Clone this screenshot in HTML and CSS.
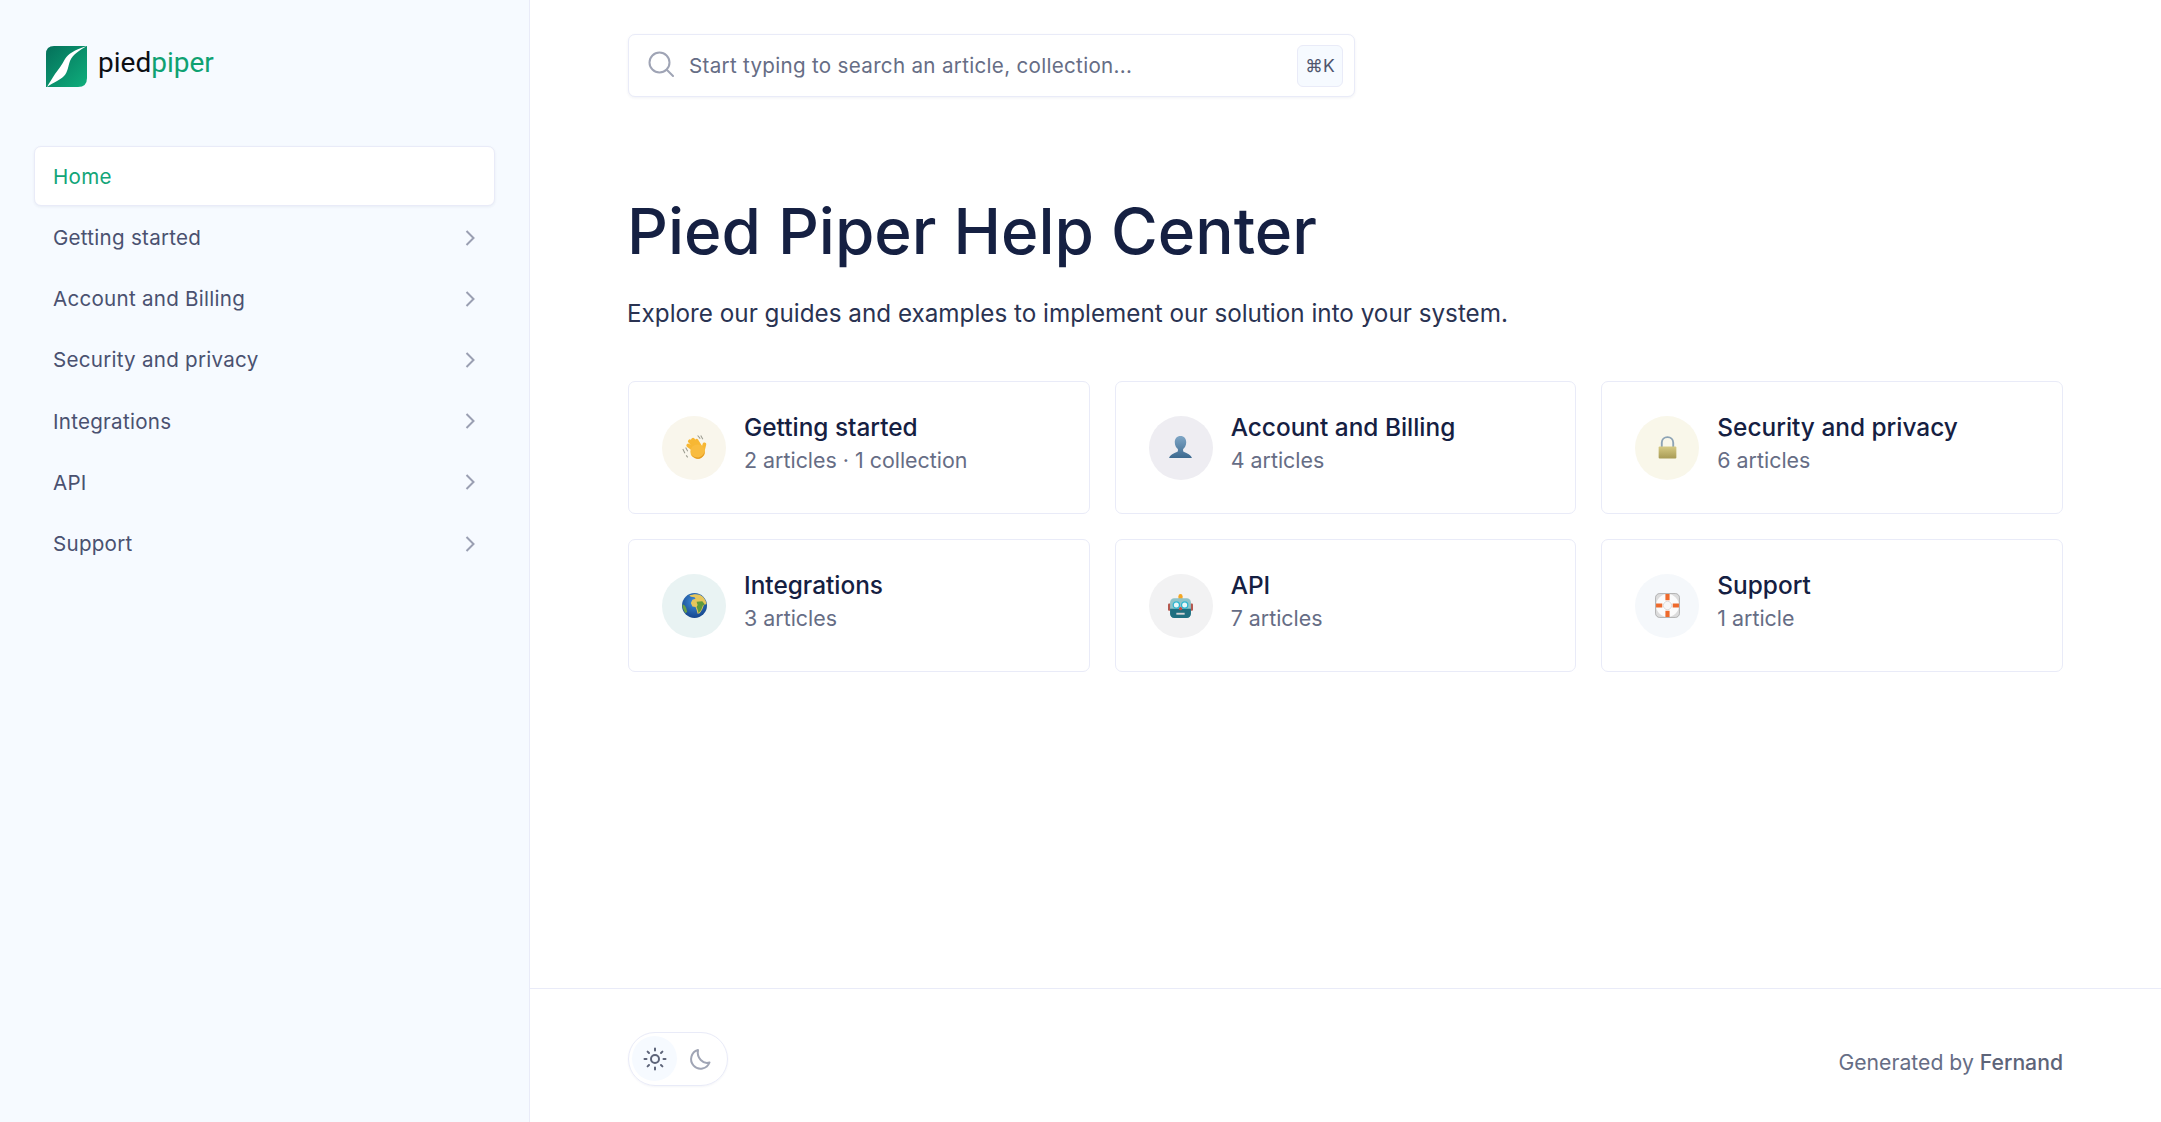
FILE: index.html
```html
<!DOCTYPE html>
<html>
<head>
    <meta charset="utf-8">
    <title>Pied Piper Help Center</title>
    <link rel="stylesheet" href="styles.css">
</head>
<body>
<div class="app">
    <aside class="sidebar">
        <a class="logo" href="#">
            <svg class="logo-mark" viewBox="0 0 41 41" width="41" height="41">
                <defs>
                    <linearGradient id="leafBg" x1="0" y1="0" x2="1" y2="1">
                        <stop offset="0" stop-color="#04705a"/>
                        <stop offset="1" stop-color="#0fae7c"/>
                    </linearGradient>
                </defs>
                <path d="M8 0H41V32Q41 41 32 41H0V8Q0 0 8 0Z" fill="url(#leafBg)"/>
                <path d="M41 0C28 4 22 8 19 13C16 19 12 24 9 28C6 33 3 37 1 41C8 36 14 34 18 30C22 26 22 20 24 15C27 8 34 4 41 0Z" fill="#fff"/>
            </svg>
            <span class="logo-text">pied<span class="logo-accent">piper</span></span>
        </a>
        <nav class="nav">
            <a class="nav-item active" href="#">Home</a>
            <a class="nav-item" href="#">Getting started
                <svg class="chevron" viewBox="0 0 10 16" width="10" height="16"><path d="M1.5 1l7 7-7 7"/></svg>
            </a>
            <a class="nav-item" href="#">Account and Billing
                <svg class="chevron" viewBox="0 0 10 16" width="10" height="16"><path d="M1.5 1l7 7-7 7"/></svg>
            </a>
            <a class="nav-item" href="#">Security and privacy
                <svg class="chevron" viewBox="0 0 10 16" width="10" height="16"><path d="M1.5 1l7 7-7 7"/></svg>
            </a>
            <a class="nav-item" href="#">Integrations
                <svg class="chevron" viewBox="0 0 10 16" width="10" height="16"><path d="M1.5 1l7 7-7 7"/></svg>
            </a>
            <a class="nav-item" href="#">API
                <svg class="chevron" viewBox="0 0 10 16" width="10" height="16"><path d="M1.5 1l7 7-7 7"/></svg>
            </a>
            <a class="nav-item" href="#">Support
                <svg class="chevron" viewBox="0 0 10 16" width="10" height="16"><path d="M1.5 1l7 7-7 7"/></svg>
            </a>
        </nav>
    </aside>

    <main class="main">
        <div class="content">
            <div class="search">
                <svg class="search-icon" viewBox="0 0 26 26" width="26" height="26">
                    <circle cx="11.5" cy="11.5" r="10"/>
                    <path d="M19 19l6 6"/>
                </svg>
                <span class="search-text">Start typing to search an article, collection...</span>
                <span class="kbd">⌘K</span>
            </div>

            <h1>Pied Piper Help Center</h1>
            <p class="intro">Explore our guides and examples to implement our solution into your system.</p>

            <div class="cards">
                <a class="card" href="#">
                    <span class="card-icon wave">
                        <svg viewBox="0 0 24 24" width="25" height="25">
                            <path d="M.8 13.500l2 4M3.500 12l2 3.500M4 19.500l1.500 2M15 .5l2.500 3M18 .5l2 3.500" stroke="#9c9c90" stroke-width="1" fill="none"/>
                            <g stroke="#f7b733" stroke-width="3.600" stroke-linecap="round" fill="none">
                                <path d="M13 15L6 10M14 13L7.500 6M16 12L10.500 4.500M18 12L14 5.500M20 15L21.500 9"/>
                            </g>
                            <circle cx="15" cy="16" r="7" fill="#f9bc3f"/>
                            <path d="M9 19c2 3.500 7 5 10 2.500 2-1.700 3-4 3-6.500-1 4-4 6.500-7 6.500-2.500 0-4.500-1-6-2.500z" fill="#e39a22"/>
                        </svg>
                    </span>
                    <span class="card-text">
                        <span class="card-title">Getting started</span>
                        <span class="card-sub">2 articles · 1 collection</span>
                    </span>
                </a>
                <a class="card" href="#">
                    <span class="card-icon person">
                        <svg viewBox="0 0 24 24" width="25" height="25">
                            <defs>
                                <linearGradient id="bust" x1="0" y1="0" x2="0" y2="1">
                                    <stop offset="0" stop-color="#7fa6c6"/>
                                    <stop offset="1" stop-color="#3d6a90"/>
                                </linearGradient>
                            </defs>
                            <path d="M12 1c3.500 0 5.500 2.500 5.500 6 0 3-1.500 5.500-3 6.500v2c1 1.500 7 2 8.500 6.500H1c1.500-4.500 7.500-5 8.500-6.500v-2C8 12.500 6.500 10 6.500 7c0-3.500 2-6 5.500-6z" fill="url(#bust)"/>
                        </svg>
                    </span>
                    <span class="card-text">
                        <span class="card-title">Account and Billing</span>
                        <span class="card-sub">4 articles</span>
                    </span>
                </a>
                <a class="card" href="#">
                    <span class="card-icon lock">
                        <svg viewBox="0 0 24 24" width="25" height="25">
                            <defs>
                                <linearGradient id="lockBody" x1="0" y1="0" x2="0" y2="1">
                                    <stop offset="0" stop-color="#d6ca84"/>
                                    <stop offset="1" stop-color="#a89b55"/>
                                </linearGradient>
                            </defs>
                            <path d="M6.500 12V7.500C6.500 4 9 2 12 2S17.500 4 17.500 7.500V12" fill="none" stroke="#8da3b5" stroke-width="1.800"/>
                            <rect x="3.500" y="11" width="17" height="11.500" rx="1" fill="url(#lockBody)"/>
                        </svg>
                    </span>
                    <span class="card-text">
                        <span class="card-title">Security and privacy</span>
                        <span class="card-sub">6 articles</span>
                    </span>
                </a>
                <a class="card" href="#">
                    <span class="card-icon globe">
                        <svg viewBox="0 0 24 24" width="25" height="25">
                            <defs>
                                <radialGradient id="sea" cx="0.5" cy="0.35" r="0.7">
                                    <stop offset="0" stop-color="#3f8fdc"/>
                                    <stop offset="1" stop-color="#123f86"/>
                                </radialGradient>
                            </defs>
                            <circle cx="12" cy="12" r="12" fill="url(#sea)"/>
                            <path d="M7 2.500C11 .5 17 .5 20 3.500c2 2 3.300 4.500 3.500 7l-2.500 1-1.500 4-2.500 4-2 .5-1-4-1-2.500-3-.5-1.500-3.500 1.500-3 3-1-1-1.500-3.500-.5z" fill="#e6c65c"/>
                            <path d="M14 8.500l5.500-.5 2.500 3-2 1-1.500 4-2.500 3.500-1-3.500-1-2.500 1-2z" fill="#5f9a3c"/>
                            <path d="M.5 11c1.500 0 3 1.500 3.500 3.500l1 3.500-1.500 1.500C1.500 17 .3 14 .5 11z" fill="#6aa045"/>
                        </svg>
                    </span>
                    <span class="card-text">
                        <span class="card-title">Integrations</span>
                        <span class="card-sub">3 articles</span>
                    </span>
                </a>
                <a class="card" href="#">
                    <span class="card-icon robot">
                        <svg viewBox="0 0 24 24" width="25" height="25">
                            <rect x="0" y="10" width="3" height="7" rx="1" fill="#b5584f"/>
                            <rect x="21" y="10" width="3" height="7" rx="1" fill="#b5584f"/>
                            <path d="M10 3a2 2 0 014 0v3h-4z" fill="#f5a623"/>
                            <rect x="2" y="5" width="20" height="19" rx="4" fill="#8fc3c8"/>
                            <path d="M2 15h20v5a4 4 0 01-4 4H6a4 4 0 01-4-4z" fill="#1f6f80"/>
                            <circle cx="8" cy="11.500" r="3" fill="#e8f6f8" stroke="#2bb5d0" stroke-width="1.200"/>
                            <circle cx="16" cy="11.500" r="3" fill="#e8f6f8" stroke="#2bb5d0" stroke-width="1.200"/>
                            <circle cx="12" cy="15" r="1.500" fill="#c9483f"/>
                            <rect x="8" y="19" width="8" height="1.800" fill="#d5d5d5"/>
                        </svg>
                    </span>
                    <span class="card-text">
                        <span class="card-title">API</span>
                        <span class="card-sub">7 articles</span>
                    </span>
                </a>
                <a class="card" href="#">
                    <span class="card-icon buoy">
                        <svg viewBox="0 0 24 24" width="25" height="25">
                            <rect x=".5" y=".5" width="23" height="23" rx="4" fill="#dcdcdc" stroke="#a0a0a0" stroke-width=".7"/>
                            <circle cx="12" cy="12" r="8" fill="#fff" stroke="#fbfbfb" stroke-width="6"/>
                            <path d="M10 1h4v6h-4zM10 17h4v6h-4zM1 10h6v4H1zM17 10h6v4h-6z" fill="#ee6a2c"/>
                            <circle cx="12" cy="12" r="4" fill="#f7f7f7" stroke="#c9c9c9" stroke-width=".6"/>
                        </svg>
                    </span>
                    <span class="card-text">
                        <span class="card-title">Support</span>
                        <span class="card-sub">1 article</span>
                    </span>
                </a>
            </div>
        </div>

        <footer class="footer">
            <div class="theme-toggle">
                <span class="theme-btn on">
                    <svg viewBox="0 0 24 24" width="24" height="24" stroke="#5d6479" stroke-width="2" fill="none" stroke-linecap="round">
                        <circle cx="12" cy="12" r="4"/>
                        <path d="M12 1.500v2M12 20.500v2M1.500 12h2M20.500 12h2M4.600 4.600l1.400 1.400M18 18l1.400 1.400M4.600 19.400L6 18M18 6l1.400-1.400"/>
                    </svg>
                </span>
                <span class="theme-btn">
                    <svg viewBox="0 0 24 24" width="24" height="24" stroke="#a0a5b5" stroke-width="2" fill="none" stroke-linejoin="round">
                        <path d="M10 3a9.500 9.500 0 1011.500 12.500C15 17.500 8.500 11 10 3z"/>
                    </svg>
                </span>
            </div>
            <span class="generated">Generated by <span class="brand">Fernand</span></span>
        </footer>
    </main>
</div>
</body>
</html>
```
FILE: styles.css
```css
* {
    box-sizing: border-box;
}

body {
    margin: 0;
    font-family: Inter, "Liberation Sans", sans-serif;
    color: #152042;
    background: #fff;
}

a {
    color: inherit;
    text-decoration: none;
}

.app {
    display: flex;
    height: 1122px;
    overflow: hidden;
}

.sidebar {
    width: 530px;
    flex: none;
    padding: 46px 34px 0;
    background: #f6faff;
    border-right: 1px solid #e9ebf8;
}

.logo {
    display: flex;
    align-items: flex-start;
    gap: 11px;
    margin-left: 12px;
    height: 41px;
}

.logo-text {
    font-family: Roboto, sans-serif;
    font-size: 28px;
    font-weight: 400;
    line-height: 30px;
    margin-top: 2px;
    color: #0c0f14;
}

.logo-accent {
    color: #0fa172;
}

.nav {
    margin-top: 59px;
    display: flex;
    flex-direction: column;
    gap: 2px;
    width: 461px;
}

.nav-item {
    display: flex;
    align-items: center;
    justify-content: space-between;
    height: 59.200px;
    padding: 0 20px 0 19px;
    font-size: 20.600px;
    letter-spacing: 0.25px;
    color: #4a5170;
    border-radius: 7px;
}

.nav-item.active {
    height: 60px;
    background: #fff;
    color: #12a578;
    border: 1px solid #e9ebf8;
    box-shadow: 0 1px 3px rgba(40, 50, 120, 0.07);
    padding-left: 18px;
}

.chevron {
    fill: none;
    stroke: #9a9fb2;
    stroke-width: 2;
}

.main {
    flex: 1;
    display: flex;
    flex-direction: column;
    min-width: 0;
}

.content {
    flex: 1;
    padding: 34px 98px 0 98px;
}

.search {
    display: flex;
    align-items: center;
    width: 727px;
    height: 63px;
    padding: 0 11px 0 19px;
    background: #fff;
    border: 1px solid #e9ebf8;
    border-radius: 7px;
    box-shadow: 0 1px 3px rgba(40, 50, 120, 0.07);
}

.search-icon {
    flex: none;
    fill: none;
    stroke: #9fa4b5;
    stroke-width: 2;
    stroke-linecap: round;
    margin-top: -3px;
}

.search-text {
    flex: 1;
    margin-left: 15px;
    font-size: 20.600px;
    letter-spacing: 0.3px;
    color: #666d85;
}

.kbd {
    display: flex;
    align-items: center;
    justify-content: center;
    width: 46px;
    height: 42px;
    font-size: 17.500px;
    color: #4f566e;
    background: #f6faff;
    border: 1px solid #e9ebf8;
    border-radius: 6px;
}

h1 {
    margin: 94px 0 0 -1px;
    font-size: 63.800px;
    line-height: 80px;
    font-weight: 500;
    color: #152042;
}

.intro {
    margin: 25px 0 0 -1px;
    font-size: 24.250px;
    line-height: 36px;
    color: #2a3352;
}

.cards {
    display: grid;
    grid-template-columns: repeat(3, 1fr);
    gap: 25px;
    margin-top: 49px;
}

.card {
    display: flex;
    align-items: center;
    gap: 18px;
    height: 133px;
    padding: 0 33px;
    border: 1px solid #e9ebf8;
    border-radius: 7px;
    background: #fff;
}

.card-icon {
    display: flex;
    align-items: center;
    justify-content: center;
    flex: none;
    width: 64px;
    height: 64px;
    border-radius: 50%;
}

.wave { background: #f9f6ec; }
.person { background: #eeedf2; }
.lock { background: #f9f7ea; }
.globe { background: #e9f3f3; }
.robot { background: #f2f2f3; }
.buoy { background: #f5f8fb; }

.card-text {
    display: flex;
    flex-direction: column;
    margin-top: -8px;
}

.card-title {
    font-size: 24.400px;
    line-height: 33px;
    font-weight: 500;
    color: #152042;
}

.card-sub {
    font-size: 21.400px;
    line-height: 33px;
    color: #666d85;
}

.footer {
    flex: none;
    display: flex;
    align-items: center;
    justify-content: space-between;
    height: 134px;
    padding: 6px 98px 0 98px;
    border-top: 1px solid #e9ebf8;
}

.theme-toggle {
    display: flex;
    align-items: center;
    width: 100px;
    height: 54px;
    padding: 3px;
    border: 1px solid #e9ebf8;
    border-radius: 27px;
    box-shadow: 0 1px 2px rgba(40, 50, 120, 0.05);
}

.theme-btn {
    display: flex;
    align-items: center;
    justify-content: center;
    width: 45px;
    height: 45px;
    border-radius: 50%;
}

.theme-btn.on {
    background: #f6faff;
}

.generated {
    font-size: 21.200px;
    color: #666d85;
    margin-top: 7px;
}

.brand {
    font-weight: 500;
    color: #5d6479;
}
```
